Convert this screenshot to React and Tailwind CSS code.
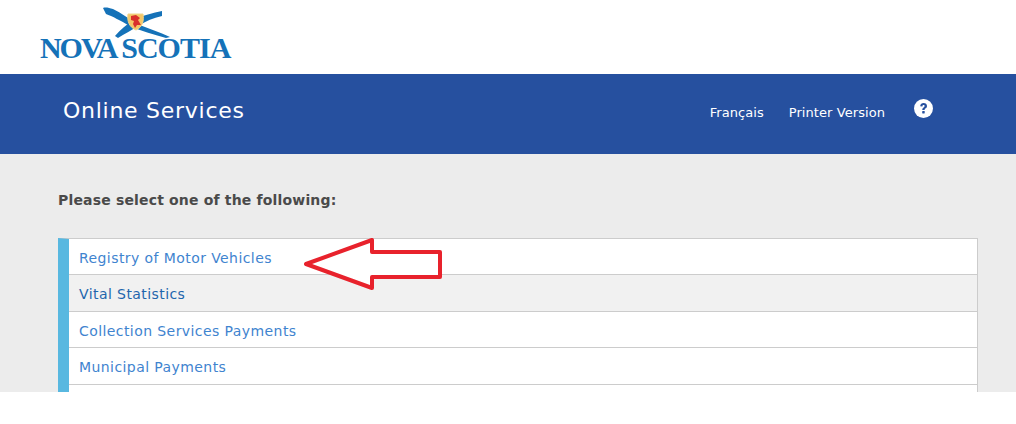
const services = [
  { name: "Registry of Motor Vehicles" },
  { name: "Vital Statistics", active: true },
  { name: "Collection Services Payments" },
  { name: "Municipal Payments" },
  { name: "" },
];

function Logo() {
  return (
    <div className="relative ml-10 h-[74px] w-[200px]">
      <div className="absolute left-0 top-[31px] flex gap-[5px] whitespace-nowrap font-['Liberation_Serif',serif] text-[30px] font-bold leading-[34px] text-[#1572b8]">
        <span className="tracking-[-2.05px]">NOVA</span>
        <span className="tracking-[-1px]">SCOTIA</span>
      </div>
      <svg className="absolute left-0 top-0" width="200" height="40" viewBox="0 0 200 40">
        <path d="M63 8 C66 7 69 8 73 9 C81 13 90 19 97 24 C107 28 120 32 130 37 L126 38 C113 34 101 31 90 26 C81 21 72 16 66 14 Z" fill="#1572b8" />
        <path d="M122 11 L122 16 C113 18 106 21 100 25 C92 30 84 34 78 38 L75 36 C80 30 87 24 94 20 C103 15 113 13 122 11 Z" fill="#1572b8" />
        <path d="M88 14 L103 14 C104 20 103 27 96 30 C89 27 87 21 88 14 Z" fill="#f5c667" stroke="#f0d58a" />
        <path d="M91 16 L96 15 L100 18 L98 20 L101 25 L97 25 L95 28 L93 24 L94 21 L91 20 Z" fill="#d9302c" />
      </svg>
    </div>
  );
}

function HelpIcon() {
  return (
    <svg width="19" height="19" viewBox="0 0 19 19">
      <circle cx="9.5" cy="9.5" r="9.5" fill="#fff" />
      <path d="M6.2 7.2 C6.3 5.2 7.8 4 9.6 4 C11.6 4 13 5.2 13 7 C13 8.4 12.1 9.1 11.3 9.6 C10.7 10 10.7 10.3 10.7 11 L8.3 11 C8.2 9.7 8.7 9 9.6 8.4 C10.3 7.9 10.6 7.6 10.6 7 C10.6 6.5 10.2 6.1 9.6 6.1 C8.9 6.1 8.5 6.6 8.4 7.4 Z" fill="#26509f" />
      <rect x="8.2" y="12" width="2.5" height="2.5" rx="0.4" fill="#26509f" />
    </svg>
  );
}

export default function App() {
  return (
    <div className="relative h-[424px] w-[1016px] overflow-hidden bg-white font-['DejaVu_Sans',sans-serif]">
      <Logo />

      <header className="flex h-[80px] items-start justify-between bg-[#26509f] pl-[63px] pr-[83px] text-white">
        <h1 className="mt-[22px] text-[22px] leading-[30px] font-normal tracking-[0.73px]">Online Services</h1>
        <nav className="flex items-start text-[13px] tracking-[0.07px]">
          <a className="mt-[30px] leading-[17px]">Français</a>
          <a className="ml-[25px] mt-[30px] leading-[17px]">Printer Version</a>
          <span className="ml-[29px] mt-[25px]">
            <HelpIcon />
          </span>
        </nav>
      </header>

      <main className="h-[238px] overflow-hidden bg-[#ececec] pl-[58px] pr-[38px] pt-[37px]">
        <p className="text-[14px] leading-[18px] font-bold tracking-[0.17px] text-[#4a4a4a]">Please select one of the following:</p>
        <ul className="mt-[29px] border-l-[11px] border-r border-t border-[#cccccc] border-l-[#58b8e0] bg-white">
          {services.map((service) => (
            <li
              key={service.name}
              className={`border-b border-[#cccccc] pl-[10px] pt-[10px] text-[14px] leading-[18px] tracking-[0.42px] odd:h-[36px] even:h-[37px] ${
                service.active ? "bg-[#f1f1f1] text-[#1f66ad]" : "bg-white text-[#3f84cf]"
              }`}
            >
              {service.name}
            </li>
          ))}
        </ul>
      </main>

      <svg className="absolute left-[300px] top-[235px]" width="146" height="58" viewBox="300 235 146 58">
        <path d="M306 264 L372 240 L372 252 L440 252 L440 277 L372 277 L372 288 Z" fill="#fff" stroke="#e8222c" strokeWidth="4" strokeLinejoin="round" />
      </svg>
    </div>
  );
}
